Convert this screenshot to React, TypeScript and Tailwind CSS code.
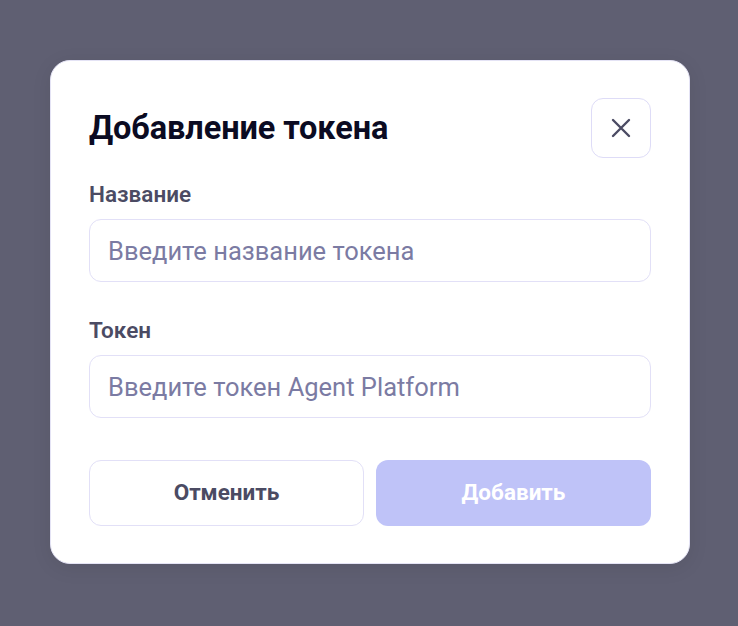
import { useState } from 'react';

export default function App() {
  const [name, setName] = useState('');
  const [token, setToken] = useState('');
  const canAdd = name.trim() !== '' && token.trim() !== '';

  return (
    <div
      className="min-h-[626px] w-full bg-[#5f5f72] flex items-start justify-center pt-[60px] pl-[2px]"
      style={{ fontFamily: 'Roboto, "Noto Sans", sans-serif' }}
    >
      <div className="w-[640px] h-[504px] rounded-[20px] bg-white border border-[#e4e3f5] px-[38px] pt-[37px] shadow-[0_4px_20px_rgba(0,0,0,0.08)]">
        <div className="flex items-center justify-between">
          <h2 className="text-[32.5px] font-bold text-[#0b0b22] tracking-[-0.1px] leading-[40px]">
            Добавление токена
          </h2>
          <button className="w-[60px] h-[60px] rounded-[12px] border border-[#dedcf7] flex items-center justify-center text-[#4b4b63]">
            <svg width="22" height="22" viewBox="0 0 22 22" fill="none" stroke="currentColor" strokeWidth="2.4" strokeLinecap="round">
              <path d="M3 3l16 16M19 3L3 19" />
            </svg>
          </button>
        </div>

        <div className="mt-[22px] flex flex-col">
          <label className="text-[22.5px] font-semibold text-[#4b4b63] leading-[28px]">Название</label>
          <input
            value={name}
            onChange={(e) => setName(e.target.value)}
            placeholder="Введите название токена"
            className="mt-[11px] h-[63px] w-full rounded-[12px] border border-[#e2e0f7] px-[18px] text-[25.5px] text-[#2b2b40] placeholder:text-[#7b7ba3] outline-none"
          />

          <label className="mt-[34px] text-[22.5px] font-semibold text-[#4b4b63] leading-[28px]">Токен</label>
          <input
            value={token}
            onChange={(e) => setToken(e.target.value)}
            placeholder="Введите токен Agent Platform"
            className="mt-[11px] h-[63px] w-full rounded-[12px] border border-[#e2e0f7] px-[18px] text-[25.5px] text-[#2b2b40] placeholder:text-[#7b7ba3] outline-none"
          />

          <div className="mt-[42px] grid grid-cols-2 gap-[12px]">
            <button className="h-[66px] rounded-[12px] border border-[#e2e0f7] bg-white text-[22.5px] font-bold text-[#4b4b63]">
              Отменить
            </button>
            <button
              disabled={!canAdd}
              className="h-[66px] rounded-[12px] bg-[#bfc3f8] text-[22.5px] font-bold text-white"
            >
              Добавить
            </button>
          </div>
        </div>
      </div>
    </div>
  );
}
